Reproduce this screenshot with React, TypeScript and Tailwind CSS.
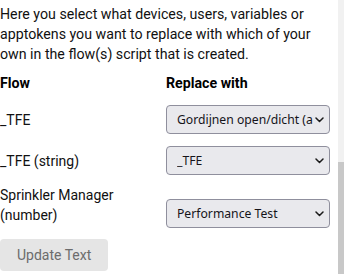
import React from "react";

function Chevron() {
  return (
    <svg width="9" height="6" viewBox="0 0 9 6" className="shrink-0">
      <polyline points="1,1 4.5,4.5 8,1" fill="none" stroke="#1b1b1b" strokeWidth="1.5" strokeLinecap="round" strokeLinejoin="round" />
    </svg>
  );
}

function FakeSelect({ value }: { value: string }) {
  return (
    <div className="flex h-[29px] w-[164px] shrink-0 items-center gap-[2px] rounded-[4px] border border-[#8f8f9d] bg-[#e9e9ed] pl-[10px] pr-[5px] text-[12.2px] text-[#15141a] [font-family:'Noto_Sans',sans-serif]">
      <span className="flex-1 overflow-hidden whitespace-nowrap">{value}</span>
      <Chevron />
    </div>
  );
}

export default function App() {
  return (
    <div className="flex h-[274px] w-[344px] overflow-hidden bg-white [font-family:Roboto,sans-serif] text-[#111111]">
      <div className="w-[338px] shrink-0 pt-[4px] pr-[8px]">
        <p className="text-[14.2px] leading-[20px]">
          Here you select what devices, users, variables or apptokens you want to replace with which of your own in the flow(s) script that is created.
        </p>
        <div className="mt-[9px] flex text-[14.2px] font-bold leading-[20px] text-black">
          <div className="w-[166px]">Flow</div>
          <div>Replace with</div>
        </div>
        <div className="mt-[12px] flex items-center text-[14px] leading-[20px]">
          <div className="w-[166px]">_TFE</div>
          <FakeSelect value="Gordijnen open/dicht (alle)" />
        </div>
        <div className="mt-[12px] flex items-center text-[14px] leading-[20px]">
          <div className="w-[166px]">_TFE (string)</div>
          <FakeSelect value="_TFE" />
        </div>
        <div className="mt-[10px] flex items-end text-[14px] leading-[20px]">
          <div className="w-[166px] pb-[3px]">
            Sprinkler Manager
            <br />
            (number)
          </div>
          <FakeSelect value="Performance Test" />
        </div>
        <button className="mt-[11px] h-[32px] rounded-[4px] bg-[#e5e5e5] px-[17px] text-[14px] text-[#6c6c6c]">
          Update Text
        </button>
      </div>
      <div className="flex w-[6px] shrink-0 flex-col bg-[#f1f1f1]">
        <div className="h-[162px]" />
        <div className="flex-1 bg-[#c8c8c8]" />
      </div>
    </div>
  );
}
